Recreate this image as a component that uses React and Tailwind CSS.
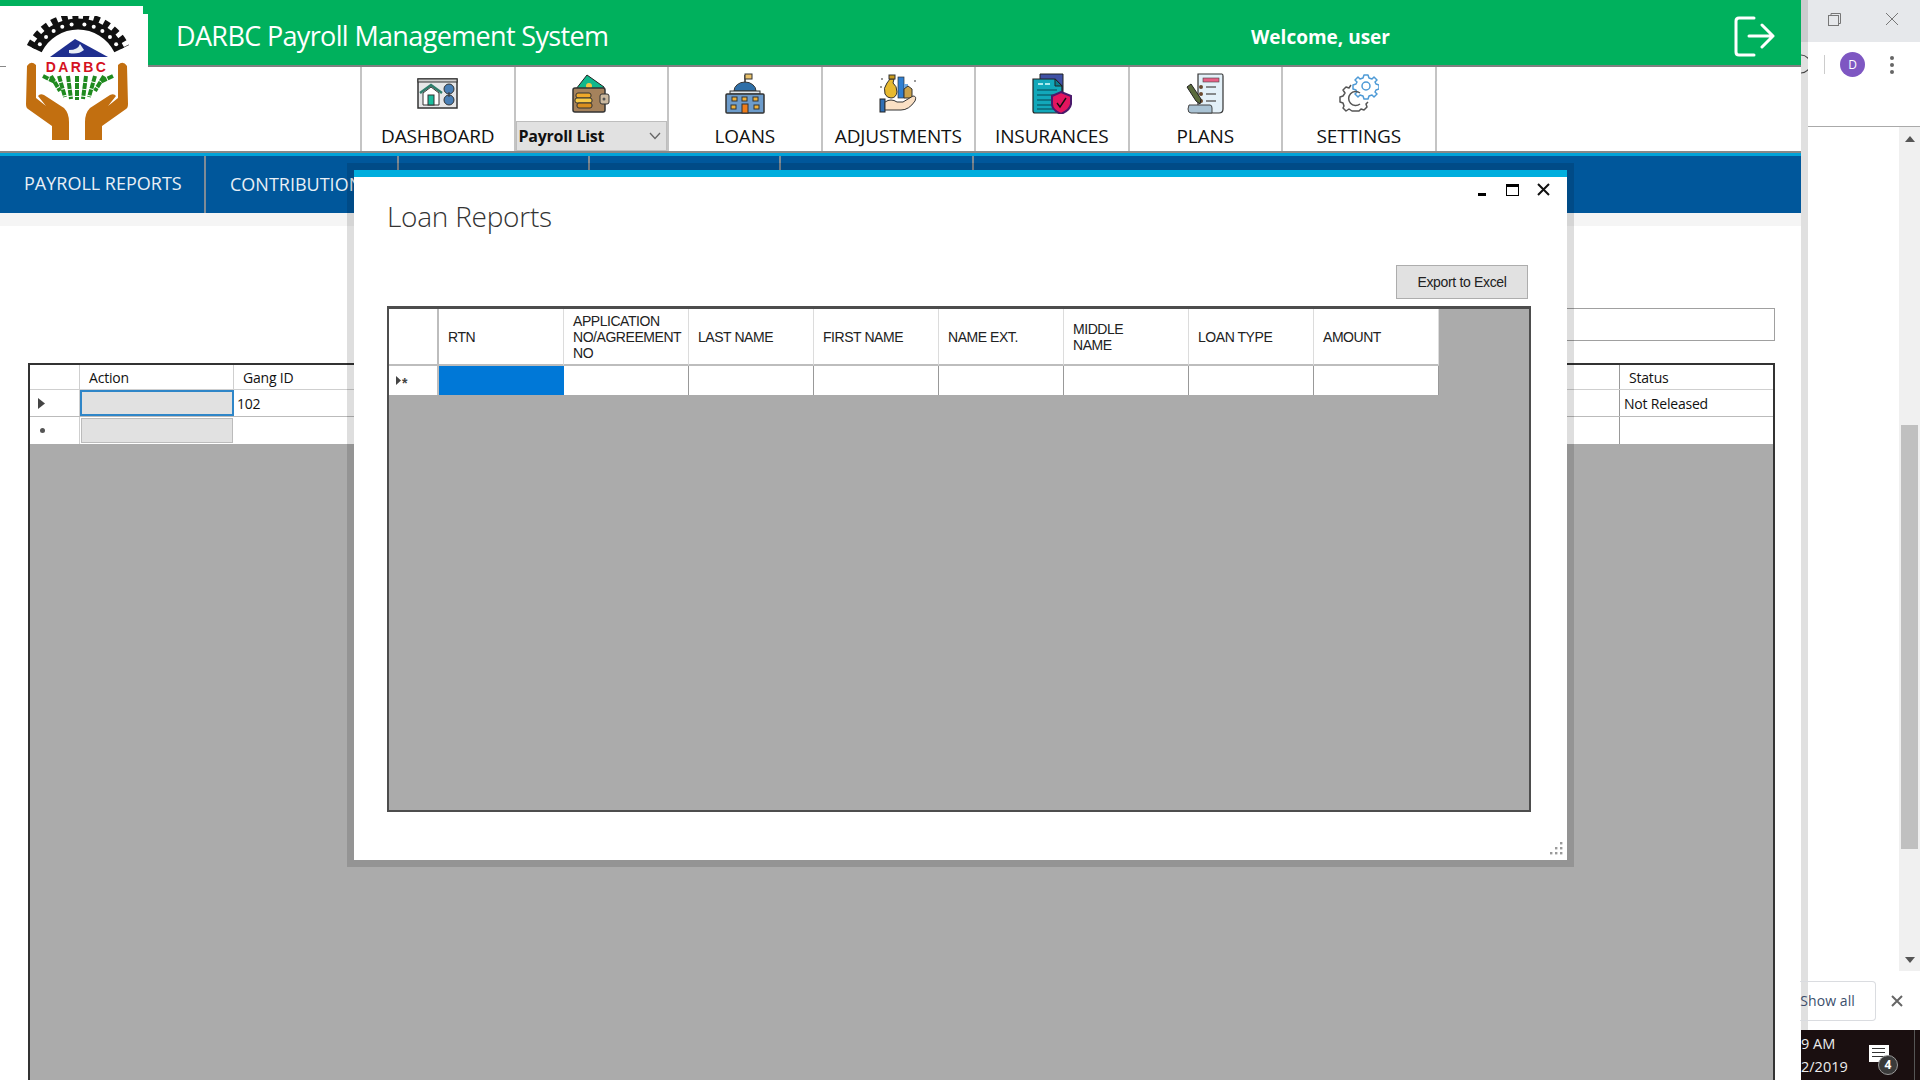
import React from "react";

const toothHoles = [202, 214, 226, 238, 250, 262, 278, 290, 302, 314, 326, 338].map((a) => {
  const r = (a * Math.PI) / 180;
  return [56 + 46 * Math.cos(r), 54 + 46 * Math.sin(r)];
});

const Logo = () => (
  <svg width="112" height="124" viewBox="0 0 112 124" className="block">
    <path d="M14.7 33.8 A46 46 0 0 1 97.3 33.8" fill="none" stroke="#111" strokeWidth="11" />
    <path d="M9 31 A52 52 0 0 1 103 31" fill="none" stroke="#111" strokeWidth="9" strokeDasharray="6 4.6" />
    <g fill="#fff">
      {toothHoles.map(([x, y], i) => (
        <circle key={i} cx={x} cy={y} r="2" />
      ))}
    </g>
    <path d="M53 23 L86 41 H28 Z" fill="#1f2f8f" />
    <path d="M47 34 Q56 34 58 28 L62 34 Q56 39 47 37 Z" fill="#e8eef5" />
    <text x="55" y="56" textAnchor="middle" fontFamily="'Liberation Sans', sans-serif" fontWeight="700" fontSize="14" letterSpacing="2.4" fill="#d5121e">DARBC</text>
    <g stroke="#1f8a1f" strokeWidth="4" fill="none" strokeDasharray="6 1">
      <path d="M21 60 L33 66" /><path d="M29 60 L38 75" /><path d="M37 60 L43 81" /><path d="M46 60 L49 83" />
      <path d="M55 60 L55 84" /><path d="M64 60 L61 83" /><path d="M73 60 L67 81" /><path d="M82 60 L73 75" /><path d="M91 60 L78 66" />
    </g>
    <path fill="#c26f10" d="M5 50 Q9 44 14 49 L14 82 L24 90 L16 80 Q18 77 22 79 L42 92 Q47 97 47 106 V124 H30 V110 L6 93 Q4 92 4 88 Z" />
    <path fill="#c26f10" d="M105 50 Q101 44 96 49 L96 82 L86 90 L94 80 Q92 77 88 79 L68 92 Q63 97 63 106 V124 H80 V110 L104 93 Q106 92 106 88 Z" />
  </svg>
);

const DashIcon = () => (
  <svg width="41" height="31" viewBox="0 0 41 31">
    <rect x="1" y="1" width="39" height="29" fill="#e6e7e8" stroke="#333" strokeWidth="1.5" />
    <rect x="1" y="1" width="39" height="3" fill="#d0d0d0" stroke="#333" strokeWidth="1" />
    <path d="M3 15 L14 7 L25 15" fill="none" stroke="#2e7d6b" strokeWidth="2.5" />
    <path d="M6 15 V27 H22 V15 L14 9 Z" fill="#fff" stroke="#333" />
    <rect x="11" y="17" width="6" height="10" fill="#1abc9c" stroke="#333" />
    <circle cx="32" cy="11" r="5" fill="#4a7fb5" stroke="#333" />
    <circle cx="32" cy="22" r="5" fill="#4a7fb5" stroke="#333" />
    <path d="M32 14 V19" stroke="#333" />
  </svg>
);
const WalletIcon = () => (
  <svg width="38" height="39" viewBox="0 0 38 39">
    <path d="M4 15 L15 1 L32 13 V17 H4 Z" fill="#10b88c" stroke="#222" />
    <circle cx="17" cy="12" r="3" fill="#f5c542" />
    <rect x="1" y="14" width="32" height="24" rx="2" fill="#a5825c" stroke="#333" strokeWidth="1.5" />
    <rect x="28" y="20" width="9" height="10" rx="2" fill="#cbb9a0" stroke="#333" />
    <circle cx="32" cy="25" r="1.5" fill="#555" />
    <rect x="4" y="19" width="15" height="5" rx="2" fill="#f0a92a" stroke="#333" />
    <rect x="3" y="24" width="17" height="5" rx="2" fill="#f7c948" stroke="#333" />
    <rect x="5" y="29" width="15" height="5" rx="2" fill="#d98e1f" stroke="#333" />
  </svg>
);
const LoanIcon = () => (
  <svg width="40" height="41" viewBox="0 0 40 41">
    <path d="M20 10 V2" stroke="#333" strokeWidth="1.5" />
    <rect x="20" y="1" width="7" height="5" fill="#e9c16a" stroke="#333" />
    <path d="M9 18 A11 9 0 0 1 31 18 Z" fill="#2f6fa8" stroke="#333" />
    <rect x="5" y="18" width="30" height="3" fill="#dfe6ec" stroke="#333" />
    <rect x="1" y="21" width="38" height="19" rx="1" fill="#6d9ccb" stroke="#333" strokeWidth="1.5" />
    {[7,17,28].map((x)=><rect key={x} x={x} y="24" width="5" height="4" fill="#f0b23a" stroke="#333" />)}
    <rect x="6" y="32" width="5" height="4" fill="#f0b23a" stroke="#333" />
    <rect x="29" y="32" width="5" height="4" fill="#f0b23a" stroke="#333" />
    <rect x="17" y="31" width="6" height="9" fill="#ef7d1a" stroke="#333" />
  </svg>
);
const AdjIcon = () => (
  <svg width="38" height="39" viewBox="0 0 38 39">
    <path d="M11 5 L8 9 Q4 14 6 20 Q8 24 12 24 Q17 24 18 18 Q18 12 14 9 L15 5 Z" fill="#e7b92f" stroke="#333" />
    <rect x="10" y="1" width="6" height="4" fill="#c99a1c" stroke="#333" />
    <rect x="19" y="3" width="6" height="21" fill="#2f7fd1" stroke="#333" strokeWidth=".7" />
    <rect x="25" y="10" width="4" height="14" fill="#6ea8e0" />
    <path d="M25 24 V15 L29 12 L33 15 V24 Z" fill="#caa24a" stroke="#333" />
    <circle cx="3" cy="5" r="1" fill="#777" /><circle cx="36" cy="7" r="1" fill="#777" /><circle cx="2" cy="13" r="1" fill="#777" />
    <rect x="1" y="25" width="5" height="13" fill="#2f6fb5" stroke="#222" />
    <path d="M6 28 Q12 24 18 28 H24 L34 22 Q38 22 36 27 Q30 36 22 36 H6 Z" fill="#fae0c4" stroke="#333" />
  </svg>
);
const InsIcon = () => (
  <svg width="40" height="41" viewBox="0 0 40 41">
    <path d="M8 1 H31 V38 H8 Z" fill="#3f51a5" stroke="#222" />
    <path d="M1 6 H23 L30 13 V40 H3 Q1 40 1 38 Z" fill="#12a8ba" stroke="#222" strokeWidth="1.2" />
    <path d="M23 6 V13 H30 Z" fill="#0b7f8f" stroke="#222" />
    {[17,22,27,32,36].map((y)=><path key={y} d={`M5 ${y} H25`} stroke="#0a5664" strokeWidth="1.2" />)}
    <path d="M6 11 H11 M13 11 H18" stroke="#dff" strokeWidth="1.4" />
    <path d="M29 19 L39 23 V31 Q38 37 29 41 Q20 37 20 31 V23 Z" fill="#e3155f" stroke="#4a1a6b" strokeWidth="2" />
    <path d="M25 30 L28 34 L34 25" stroke="#111" strokeWidth="1.4" fill="none" />
  </svg>
);
const PlanIcon = () => (
  <svg width="38" height="41" viewBox="0 0 38 41">
    <path d="M12 1 H36 Q37 1 37 3 V36 Q37 40 33 40 H12 Z" fill="#e3f0f8" stroke="#333" strokeWidth="1.2" />
    <rect x="17" y="5" width="16" height="4" fill="#e66085" stroke="#444" strokeWidth=".6" />
    {[14,21,28].map((y)=>(<g key={y}><circle cx="15" cy={y} r="2" fill="#6b4a2f" /><path d={`M20 ${y} H30`} stroke="#666" strokeWidth="1.5" /></g>))}
    <path d="M1 14 L5 11 L15 26 L14 31 L10 28 Z" fill="#5a6b3c" stroke="#222" />
    <path d="M3 32 H24 Q26 32 26 35 V40 H5 Q2 40 2 36 Z" fill="#aac3d4" stroke="#444" />
  </svg>
);
const GearIcon = () => (
  <svg width="40" height="39" viewBox="0 0 40 39">
    <g fill="none" strokeLinejoin="round">
      <circle cx="27" cy="12" r="4" stroke="#4e9ad6" strokeWidth="1.5" />
      <path d="M25 1 h4 l1 3 l3 1 l2 -2 l3 3 l-2 2 l1 2 l3 1 v4 l-3 1 l-1 2 l2 2 l-3 3 l-2 -2 l-3 1 l-1 3 h-4 l-1 -3 l-3 -1 l-2 2 l-3 -3 l2 -2 l-1 -2 l-3 -1 v-4 l3 -1 l1 -2 l-2 -2 l3 -3 l2 2 l3 -1 Z" stroke="#4e9ad6" strokeWidth="1.5" />
      <path d="M12 11 L10 14 L7 13 L4 16 L6 19 L4 22 L1 23 V28 L4 29 L5 32 L4 34 L7 37 L10 35 L13 37 H20 L22 35 L25 36 L28 33 L27 30 L29 28" stroke="#555" strokeWidth="1.5" />
      <path d="M21 19 A7 7 0 1 0 21 30" stroke="#555" strokeWidth="1.5" />
    </g>
  </svg>
);

const NavCell = ({ icon, label, dy }) => (
  <div className="flex h-full w-[153.5px] flex-col items-center border-r-2 border-[#c4c4c4]">
    <div className={`flex h-[57px] items-start ${dy}`}>{icon}</div>
    <div className="font-['Open_Sans','Noto_Sans',sans-serif] text-[19px] leading-[24px] tracking-[-0.15px] text-[#111]">{label}</div>
  </div>
);

const subDividers = ["w-[206px]", "w-[193px]", "w-[191px]", "w-[191px]", "w-[193px]"];

const hdr = ["RTN", "APPLICATION NO/AGREEMENT NO", "LAST NAME", "FIRST NAME", "NAME EXT.", "MIDDLE NAME", "LOAN TYPE", "AMOUNT"];

const Dots = () => (
  <svg width="13" height="13" viewBox="0 0 13 13" className="fill-[#9a9a9a]">
    {[[10,0],[10,5],[5,5],[10,10],[5,10],[0,10]].map(([x,y],i)=><rect key={i} x={x} y={y} width="2.4" height="2.4" />)}
  </svg>
);

const Modal = () => (
  <div className="absolute left-[354px] top-[170px] flex h-[690px] w-[1213px] flex-col border-t-[7px] border-[#00aede] bg-white pr-[37px] pl-[33px] shadow-[0_0_0_7px_rgba(0,0,0,0.13)]">
    <div className="absolute top-[6px] right-[17px] flex items-center">
      <div className="mt-[9px] h-[3px] w-[8px] bg-black" />
      <div className="ml-[20px] h-[12px] w-[13px] border-[1.5px] border-t-[3px] border-black" />
      <svg width="13" height="13" viewBox="0 0 13 13" className="ml-[18px]"><path d="M1 1 L12 12 M12 1 L1 12" stroke="#111" strokeWidth="2" /></svg>
    </div>
    <div className="mt-[20px] h-[39px] font-['Open_Sans',sans-serif] text-[28px] leading-[39px] font-light tracking-[-0.25px] text-[#333]">Loan Reports</div>
    <div className="mt-[29px] flex justify-end pr-[2px]">
      <div className="flex h-[34px] w-[132px] items-center justify-center border border-[#adadad] bg-[#e1e1e1] pt-[1px] font-['Liberation_Sans',sans-serif] text-[14px] tracking-[-0.33px] text-[#222]">Export to Excel</div>
    </div>
    <div className="mt-[7px] h-[506px] w-[1144px] border-2 border-t-[3px] border-[#4d4d4d] bg-[#ababab]">
      <div className="flex h-[57px]">
        <div className="w-[50px] border-r-2 border-b-2 border-[#bdbdbd] bg-white" />
        {hdr.map((h) => (
          <div key={h} className="flex w-[125px] items-center border-r border-b-2 border-[#dcdcdc] border-b-[#bdbdbd] bg-white pr-[2px] pl-[9px] font-['Liberation_Sans',sans-serif] text-[14px] leading-[16px] tracking-[-0.45px] text-[#222]">
            <span className={h === "MIDDLE NAME" ? "w-[60px]" : ""}>{h}</span>
          </div>
        ))}
      </div>
      <div className="flex h-[29px]">
        <div className="flex w-[50px] items-center gap-[1px] border-r-2 border-[#bdbdbd] bg-white pl-[7px]">
          <svg width="5" height="9" viewBox="0 0 5 9" className="fill-[#444]"><path d="M0 0 L5 4.5 L0 9 Z" /></svg>
          <span className="mt-[4px] font-['Liberation_Sans',sans-serif] text-[14px] leading-[14px] font-bold text-[#444]">*</span>
        </div>
        <div className="w-[125px] bg-[#0078d7]" />
        {hdr.slice(1).map((h) => (
          <div key={h} className="w-[125px] border-r border-[#999] bg-white" />
        ))}
      </div>
    </div>
    <div className="absolute right-[4px] bottom-[5px]"><Dots /></div>
  </div>
);

const Chrome = () => (
  <div className="flex h-full w-[112px] flex-col bg-white font-['Open_Sans',sans-serif]">
    <div className="flex h-[42px] items-center justify-end gap-[44px] bg-[#e6e8eb] pr-[21px] pb-[4px]">
      <svg width="13" height="13" viewBox="0 0 13 13" fill="none" stroke="#777"><rect x=".5" y="2.5" width="10" height="10" /><path d="M3 2.5 V.5 H12.5 V10.5 H10.5" /></svg>
      <svg width="14" height="14" viewBox="0 0 14 14" stroke="#777"><path d="M1 1 L13 13 M13 1 L1 13" /></svg>
    </div>
    <div className="flex h-[85px] items-start border-b border-[#aaa] pt-[10px] pl-[16px]">
      <div className="mt-[3px] h-[19px] w-px bg-[#ccc]" />
      <div className="ml-[15px] flex h-[25px] w-[25px] items-center justify-center rounded-full bg-[#7e57c2] text-[12px] text-white">D</div>
      <div className="mt-[4px] ml-[25px] flex flex-col gap-[3px]">
        <div className="h-[4px] w-[4px] rounded-full bg-[#666]" />
        <div className="h-[4px] w-[4px] rounded-full bg-[#666]" />
        <div className="h-[4px] w-[4px] rounded-full bg-[#666]" />
      </div>
    </div>
    <div className="flex min-h-0 flex-1 justify-end">
      <div className="flex w-[21px] flex-col items-center bg-[#f0f0f0] pt-[9px] pb-[8px]">
        <svg width="10" height="6" viewBox="0 0 10 6" className="fill-[#555]"><path d="M5 0 L10 6 H0 Z" /></svg>
        <div className="mt-[283px] h-[424px] w-[17px] bg-[#c0c0c0]" />
        <div className="flex-1" />
        <svg width="10" height="6" viewBox="0 0 10 6" className="fill-[#555]"><path d="M5 6 L10 0 H0 Z" /></svg>
      </div>
    </div>
    <div className="flex h-[59px] items-center">
      <div className="-ml-[8px] flex h-[40px] w-[76px] items-center justify-end rounded-r-[4px] border border-l-0 border-[#dadce0] pr-[20px] text-[14px] leading-none tracking-[0.1px] text-[#3c4f6c]"><span className="whitespace-nowrap">Show all</span></div>
      <svg width="12" height="12" viewBox="0 0 12 12" stroke="#666" strokeWidth="2" className="ml-[15px]"><path d="M1 1 L11 11 M11 1 L1 11" /></svg>
    </div>
    <div className="relative flex h-[50px] items-center bg-[#1a0f10] text-[#ececec]">
      <div className="-ml-[7px] w-[68px] shrink-0 text-[14.5px] leading-[23px] whitespace-nowrap"><div>9 AM</div><div>2/2019</div></div>
      <div className="-mt-[3px] h-[17px] w-[20px] bg-white pt-[3px] pl-[3px]">
        <div className="h-px w-[13px] bg-[#333]" /><div className="mt-[3px] h-px w-[13px] bg-[#333]" /><div className="mt-[3px] h-px w-[13px] bg-[#333]" />
      </div>
      <div className="absolute top-[25px] left-[70px] flex h-[20px] w-[20px] items-center justify-center rounded-full border border-[#999] bg-[#3a3a3a] text-[12px] font-bold text-white">4</div>
      <div className="absolute top-0 left-[106px] h-full w-px bg-[#555]" />
    </div>
  </div>
);

const Strip = () => (
  <div className="flex h-full w-[7px] shrink-0 flex-col bg-[#e0e0e0]">
    <div className="h-[42px] shrink-0 bg-[#cbccce]" />
    <svg width="7" height="20" viewBox="0 0 7 20" fill="none" stroke="#444" strokeWidth="1.2" className="mt-[12px] shrink-0"><path d="M0 1 A9 9 0 0 1 0 19" /></svg>
    <div className="flex-1" />
    <div className="h-[50px] shrink-0 bg-[#1a0f10]" />
  </div>
);

export default function App() {
  return (
    <div className="relative flex h-[1080px] w-[1920px] overflow-hidden bg-white">
      <div className="flex h-full w-[1801px] flex-col">
        <div className="flex h-[67px] shrink-0 items-center justify-between border-b-2 border-[#808080] bg-[#00b15d] pt-[5px] pr-[26px] pl-[176px] text-white">
          <div className="flex w-full items-center">
            <div className="w-[1075px] font-['Open_Sans',sans-serif] text-[27px] leading-none tracking-[-0.65px]">DARBC Payroll Management System</div>
            <div className="w-[483px] pt-[5px] font-['Open_Sans',sans-serif] text-[19px] leading-none font-bold tracking-[0px]">Welcome, user</div>
            <svg width="41" height="41" viewBox="0 0 41 41" fill="none" stroke="#fff" strokeWidth="3" strokeLinecap="round" strokeLinejoin="round" className="mt-[3px]">
              <path d="M20 2 H5 Q2 2 2 5 V36 Q2 39 5 39 H20" /><path d="M15 20 H39 M28 9 L39 20 L28 31" />
            </svg>
          </div>
        </div>
        <div className="flex h-[86px] shrink-0 border-b-2 border-[#888]">
          <div className="w-[360px] shrink-0" />
          <div className="flex h-full border-l-2 border-[#c4c4c4]">
            <NavCell icon={<DashIcon />} label="DASHBOARD" dy="pt-[11px]" />
            <div className="flex h-full w-[153.5px] flex-col border-r-2 border-[#c4c4c4]">
              <div className="flex h-[54px] items-start justify-center pt-[7px]"><WalletIcon /></div>
              <div className="flex h-[30px] items-center justify-between border border-[#bdbdbd] bg-[#e1e1e1] pr-[5px] pl-[2px] font-['Open_Sans',sans-serif] text-[16px] font-bold tracking-[-0.25px] text-[#111]">
                <span>Payroll List</span>
                <svg width="12" height="8" viewBox="0 0 12 8" fill="none" stroke="#666" strokeWidth="1.3"><path d="M1 1 L6 6.5 L11 1" /></svg>
              </div>
            </div>
            <NavCell icon={<LoanIcon />} label="LOANS" dy="pt-[6px]" />
            <NavCell icon={<AdjIcon />} label="ADJUSTMENTS" dy="pt-[7px]" />
            <NavCell icon={<InsIcon />} label="INSURANCES" dy="pt-[6px]" />
            <NavCell icon={<PlanIcon />} label="PLANS" dy="pt-[6px]" />
            <NavCell icon={<GearIcon />} label="SETTINGS" dy="pt-[7px]" />
          </div>
        </div>
        <div className="h-[3px] shrink-0 bg-[#00a3d9]" />
        <div className="flex h-[57px] shrink-0 bg-[#00579b] font-['Open_Sans',sans-serif] text-[18px] text-[#e8eff6]">
          {subDividers.map((w, i) => (
            <div key={w + i} className={`flex h-full ${w} items-center border-r-2 border-[#7f8b96] pl-[24px]`}>
              {i === 0 ? <span className="-mt-[2px] whitespace-nowrap">PAYROLL REPORTS</span> : i === 1 ? <span className="whitespace-nowrap">CONTRIBUTIONS</span> : null}
            </div>
          ))}
        </div>
        <div className="h-[13px] shrink-0 bg-[#f5f5f5]" />
        <div className="flex min-h-0 flex-1 flex-col pr-[26px] pl-[28px]">
          <div className="mt-[82px] flex h-[33px] shrink-0 justify-end">
            <div className="h-full w-[400px] border border-[#a0a0a0] bg-white" />
          </div>
          <div className="mt-[22px] flex min-h-0 flex-1 flex-col border-2 border-b-0 border-[#333] bg-[#ababab] font-['Open_Sans',sans-serif] text-[14px] tracking-[-0.2px] text-[#111]">
            <div className="flex h-[25px] shrink-0 border-b border-[#cfcfcf] bg-white">
              <div className="w-[50px] border-r border-[#cfcfcf]" />
              <div className="flex w-[154px] items-center border-r border-[#cfcfcf] pl-[9px]">Action</div>
              <div className="flex flex-1 items-center pl-[9px]">Gang ID</div>
              <div className="flex w-[154px] items-center border-l border-[#999] pl-[9px]">Status</div>
            </div>
            <div className="flex h-[27px] shrink-0 border-b border-[#bbb] bg-white">
              <div className="flex w-[50px] items-center border-r border-[#cfcfcf] pl-[8px]">
                <svg width="7" height="11" viewBox="0 0 7 11" className="fill-[#444]"><path d="M0 0 L7 5.5 L0 11 Z" /></svg>
              </div>
              <div className="w-[154px] border-2 border-[#2f86c8] bg-[#e1e1e1]" />
              <div className="flex flex-1 items-center pl-[3px]">102</div>
              <div className="flex w-[154px] items-center border-l border-[#999] pl-[4px]">Not Released</div>
            </div>
            <div className="flex h-[27px] shrink-0 bg-white">
              <div className="flex w-[50px] items-center border-r border-[#cfcfcf] pl-[10px]">
                <div className="h-[5px] w-[5px] rounded-full bg-[#555]" />
              </div>
              <div className="m-[1px] w-[152px] border-[1.5px] border-[#bbb] bg-[#e1e1e1]" />
              <div className="flex-1" />
              <div className="w-[154px] border-l border-[#999]" />
            </div>
          </div>
        </div>
      </div>
      <Strip />
      <Chrome />
      <div className="absolute top-[6px] left-0 h-[61px] w-[143px] bg-white">
        <div className="absolute top-[8px] left-[143px] h-[53px] w-[5px] bg-white" />
        <div className="absolute top-[60px] left-0 h-px w-[6px] bg-[#888]" />
        <div className="absolute top-[10px] left-[22px]"><Logo /></div>
      </div>
      <Modal />
    </div>
  );
}
